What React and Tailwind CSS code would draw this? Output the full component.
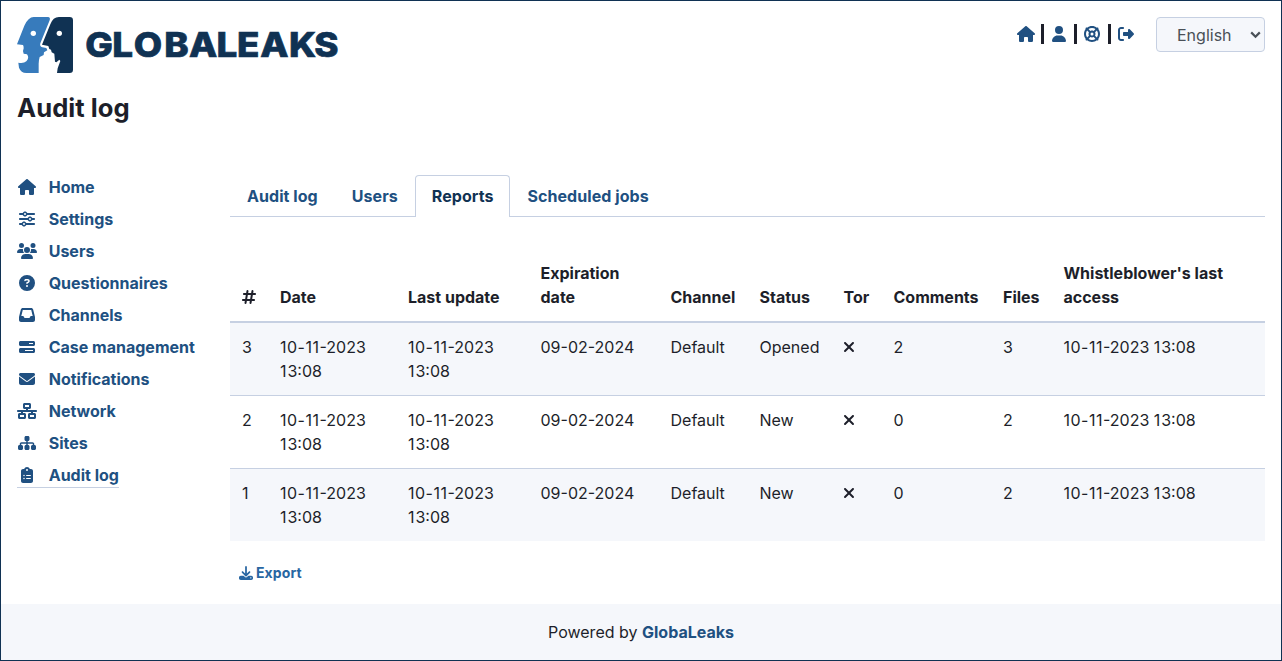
import { FaHouse, FaSliders, FaUsers, FaCircleQuestion, FaInbox, FaBarsProgress, FaEnvelope, FaNetworkWired, FaSitemap, FaClipboardList, FaUser, FaLifeRing, FaRightFromBracket, FaDownload, FaXmark, FaHashtag } from "react-icons/fa6";

const menu = [
  ["Home", FaHouse, "h-4 w-[18px]"],
  ["Settings", FaSliders, "h-4 w-4"],
  ["Users", FaUsers, "h-4 w-5"],
  ["Questionnaires", FaCircleQuestion, "h-4 w-4"],
  ["Channels", FaInbox, "h-4 w-4"],
  ["Case management", FaBarsProgress, "h-4 w-4"],
  ["Notifications", FaEnvelope, "h-4 w-4"],
  ["Network", FaNetworkWired, "h-4 w-5"],
  ["Sites", FaSitemap, "h-4 w-[18px]"],
  ["Audit log", FaClipboardList, "h-4 w-3"],
];

const tabs = ["Audit log", "Users", "Reports", "Scheduled jobs"];

const headings = ["#", "Date", "Last update", "Expiration date", "Channel", "Status", "Tor", "Comments", "Files", "Whistleblower's last access"];

const rows = [
  { id: 3, status: "Opened", comments: 2, files: 3 },
  { id: 2, status: "New", comments: 0, files: 2 },
  { id: 1, status: "New", comments: 0, files: 2 },
];

function Logo() {
  return (
    <svg width="322" height="56" viewBox="0 0 322 56" className="block">
      <g transform="scale(0.33333)">
        <path fill="#377bbc" d="M0 82 L22 26 Q34 0 50 0 H93 Q101 1 98 10 L70 79 Q67 88 76 91 L88 93 L91 100 L81 106 L80 114 L68 120 Q65 130 65 140 V168 H28 Q12 168 6 152 L4 137 Q20 140 28 133 Q38 122 30 112 L20 110 L18 102 L20 94 Q20 86 18 84 Z" />
        <path fill="#103253" d="M75 83 L100 22 Q108 0 126 0 H158 Q168 0 168 10 V158 Q168 168 158 168 H120 L122 154 L130 132 L127 128 L118 136 L114 134 L112 110 L104 106 L102 98 L97 96 L94 87 Z" />
        <circle cx="49" cy="49" r="8" fill="#fff" />
        <circle cx="127" cy="49" r="8" fill="#fff" />
      </g>
      <text transform="scale(1.08 1)" x="63.3 88.3 108 136.3 159.2 184.8 203.7 225.2 251.8 275.3" y="39.8" fill="#103253" stroke="#103253" strokeWidth="0.7" className="font-['Inter',sans-serif] text-[34px] font-extrabold">GLOBALEAKS</text>
    </svg>
  );
}

function Separator() {
  return <span className="h-5 w-[2.5px] bg-[#1d1f2a]" />;
}

function DateText() {
  return <><span className="tracking-[0.5px]">10-11</span>-2023</>;
}

function TimeText() {
  return <><span className="tracking-[0.9px]">1</span>3:08</>;
}

export default function App() {
  return (
    <div className="flex h-[661px] w-[1282px] flex-col border border-[#103253] bg-white font-['Inter',sans-serif] text-base leading-6 text-[#1d1f2a]">
      <header className="flex justify-between pt-4 pl-4 pr-4">
        <Logo />
        <div className="flex items-start">
          <div className="mt-[7px] flex h-5 items-center text-base text-[#205081]">
            <FaHouse className="mr-[6px] h-4 w-[18px]" />
            <Separator />
            <FaUser className="ml-2 mr-[8.5px] h-4 w-[14px]" />
            <Separator />
            <FaLifeRing className="ml-[7.5px] mr-2 h-4 w-4" />
            <Separator />
            <FaRightFromBracket className="ml-[7.5px] h-4 w-4" />
          </div>
          <div className="ml-[22px] flex h-[35px] w-[109px] items-center justify-between rounded border border-[#c6d0e2] bg-[#f5f7fb] pl-5 pr-[3px] text-[#495057]">
            <span>English</span>
            <svg width="11" height="8" viewBox="0 0 11 8" fill="none" stroke="currentColor" strokeWidth="2.2"><path d="M1.2 1.4 L5.5 5.7 L9.8 1.4" /></svg>
          </div>
        </div>
      </header>
      <h1 className="mt-[19px] pl-4 text-[25.6px] font-bold leading-[31px] tracking-[0.05px]">Audit log</h1>
      <main className="mt-[52px] flex flex-1 pl-4 pr-4">
        <nav className="w-[213px] font-bold text-[#205081]">
          {menu.map(([label, Icon, size], i) => (
            <div key={label} className="flex h-8 items-start">
              <div className={i === 9 ? "flex items-center border-b border-[#c6d0e2]" : "flex items-center"}>
                <span className="mr-[11.7px] flex w-5 justify-center"><Icon className={size} /></span>
                {label}
              </div>
            </div>
          ))}
        </nav>
        <section className="flex w-[1035px] flex-col">
          <div className="flex h-[42px] border-b border-[#c6d0e2] font-bold tracking-[0.06px] text-[#205081]">
            {tabs.map((t, i) => (
              <div key={t} className={i === 2 ? "h-[42px] rounded-t border border-b-0 border-[#c6d0e2] bg-white px-4 pt-2 text-[#103253]" : "px-[17px] pt-[9px]"}>{t}</div>
            ))}
          </div>
          <table className="mt-8 w-full table-fixed border-separate border-spacing-0 text-left">
            <colgroup>
              <col className="w-[38px]" /><col className="w-[128px]" /><col className="w-[132.5px]" /><col className="w-[130px]" /><col className="w-[89px]" /><col className="w-[84px]" /><col className="w-[50px]" /><col className="w-[109.5px]" /><col className="w-[60.5px]" /><col />
            </colgroup>
            <thead>
              <tr>
                {headings.map((h) => (
                  <th key={h} className="border-b-2 border-[#c6d0e2] py-3 pl-3 pr-2 align-bottom font-bold">
                    {h === "#" ? <FaHashtag className="mb-1 h-4 w-[14px]" /> : h}
                  </th>
                ))}
              </tr>
            </thead>
            <tbody className="[&_td]:border-[#c6d0e2] [&_td]:py-3 [&_td]:pl-3 [&_td]:align-top [&_tr:nth-child(odd)]:bg-[#f5f7fb] [&_tr:not(:last-child)_td]:border-b">
              {rows.map((r) => (
                <tr key={r.id}>
                  <td>{r.id}</td>
                  <td><DateText /><br /><TimeText /></td>
                  <td><DateText /><br /><TimeText /></td>
                  <td>09-02-2024</td>
                  <td>Default</td>
                  <td>{r.status}</td>
                  <td><FaXmark className="-ml-[0.5px] mt-1 h-4 w-3" /></td>
                  <td>{r.comments}</td>
                  <td>{r.files}</td>
                  <td><DateText /> <TimeText /></td>
                </tr>
              ))}
            </tbody>
          </table>
          <div className="mt-[21px] flex items-center gap-[3px] pl-[9px] text-sm font-bold leading-[21px] tracking-[0.1px] text-[#2866a2]">
            <FaDownload className="h-[14px] w-[14px]" />
            Export
          </div>
        </section>
      </main>
      <footer className="flex h-14 items-center justify-center bg-[#f5f7fb]">
        <span>Powered by <span className="font-bold text-[#205081]">GlobaLeaks</span></span>
      </footer>
    </div>
  );
}
